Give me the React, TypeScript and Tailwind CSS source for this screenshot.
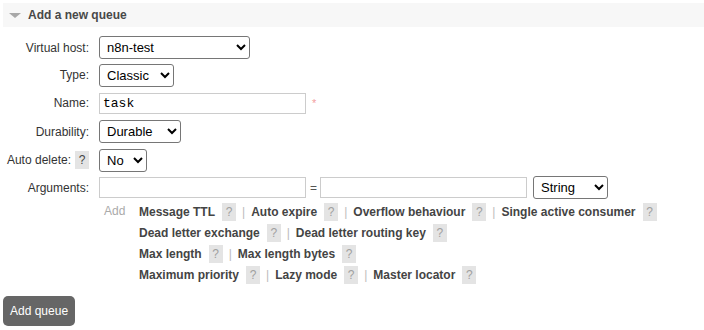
import React from 'react';

const HINT_ROWS: string[][] = [
  ['Message TTL', 'Auto expire', 'Overflow behaviour', 'Single active consumer'],
  ['Dead letter exchange', 'Dead letter routing key'],
  ['Max length', 'Max length bytes'],
  ['Maximum priority', 'Lazy mode', 'Master locator'],
];

const Help = ({ muted = true }: { muted?: boolean }) => (
  <span
    className={`inline-flex h-[18px] w-[14px] items-center justify-center bg-[#e4e4e4] text-[12px] ${
      muted ? 'text-[#a0a0a0]' : 'text-[#444]'
    }`}
  >
    ?
  </span>
);

const Select = ({ value, options, width }: { value: string; options: string[]; width: string }) => (
  <select
    defaultValue={value}
    className={`${width} h-[23px] rounded-[3px] border border-[#767676] bg-white pl-[3px] text-[13px] text-black`}
  >
    {options.map((o) => (
      <option key={o}>{o}</option>
    ))}
  </select>
);

const Row = ({ label, h, children }: { label: React.ReactNode; h: string; children: React.ReactNode }) => (
  <div className={`flex items-center ${h}`}>
    <div className="flex w-[89px] shrink-0 items-center justify-end text-[12px] text-[#333]">{label}</div>
    <div className="ml-[10px] flex items-center">{children}</div>
  </div>
);

export default function App() {
  return (
    <div className="h-[330px] w-[704px] overflow-hidden bg-white font-['Liberation_Sans',Arial,sans-serif] text-[12px]">
      {/* section header */}
      <div className="ml-[3px] mt-[3px] flex h-[24px] items-center bg-[#f7f7f7]">
        <span className="ml-[6px] h-0 w-0 border-x-[6px] border-t-[5px] border-x-transparent border-t-[#a8a8a8]" />
        <span className="ml-[7px] font-bold text-[#484848]">Add a new queue</span>
      </div>

      <div className="mt-[7px]">
        <Row label="Virtual host:" h="h-[27px]">
          <Select value="n8n-test" options={['/', 'n8n-test']} width="w-[151px]" />
        </Row>
        <Row label="Type:" h="h-[28px]">
          <Select value="Classic" options={['Classic', 'Quorum', 'Stream']} width="w-[75px]" />
        </Row>
        <Row label="Name:" h="h-[28px]">
          <input
            defaultValue="task"
            className="h-[21px] w-[207px] border border-[#cccccc] bg-white px-[3px] font-['Liberation_Mono',monospace] text-[13px] text-black"
          />
          <span className="ml-[6px] text-[11px] text-[#f3a0a0]">*</span>
        </Row>
        <Row label="Durability:" h="h-[29px]">
          <Select value="Durable" options={['Durable', 'Transient']} width="w-[82px]" />
        </Row>
        <Row
          label={
            <>
              <span>Auto delete:</span>
              <span className="ml-[4px]">
                <Help muted={false} />
              </span>
            </>
          }
          h="h-[28px]"
        >
          <Select value="No" options={['No', 'Yes']} width="w-[48px]" />
        </Row>
        <Row label="Arguments:" h="h-[27px]">
          <input className="h-[21px] w-[207px] border border-[#cccccc] bg-white" />
          <span className="ml-[4px] mr-[3px] text-[#555]">=</span>
          <input className="h-[21px] w-[207px] border border-[#cccccc] bg-white" />
          <span className="ml-[6px]">
            <Select value="String" options={['String', 'Number', 'Boolean', 'List']} width="w-[75px]" />
          </span>
        </Row>

        <div className="flex">
          <div className="ml-[104px] w-[35px] pt-[1px] text-[#aaa]">Add</div>
          <div className="flex flex-col">
            {HINT_ROWS.map((row, i) => (
              <div key={i} className="flex h-[21px] items-center">
                {row.map((name, j) => (
                  <React.Fragment key={name}>
                    {j > 0 && <span className="mx-[6px] text-[#bbb]">|</span>}
                    <span className="font-bold text-[#444]">{name}</span>
                    <span className="ml-[7px]">
                      <Help />
                    </span>
                  </React.Fragment>
                ))}
              </div>
            ))}
          </div>
        </div>
      </div>

      <button className="ml-[3px] mt-[11px] h-[30px] rounded-[5px] bg-[#666] px-[7px] text-[12px] text-white">
        Add queue
      </button>
    </div>
  );
}
